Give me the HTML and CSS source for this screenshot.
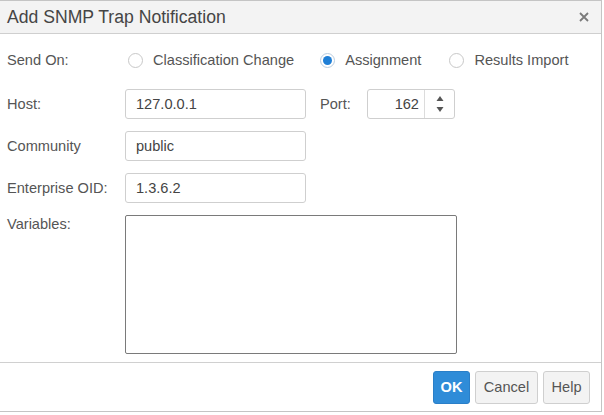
FILE: index.html
```html
<!DOCTYPE html>
<html>
<head>
<meta charset="utf-8">
<link rel="stylesheet" href="styles.css">
</head>
<body>
<div class="dialog">
  <div class="header">
    <span class="title">Add SNMP Trap Notification</span>
    <svg class="close" width="10" height="10" viewBox="0 0 10 10"><path d="M1 1 L9 9 M9 1 L1 9" stroke="#7a7a7a" stroke-width="1.8"/></svg>
  </div>
  <div class="body">
    <div class="row row-send">
      <label class="lbl">Send On:</label>
      <div class="radios">
        <span class="radio radio-1"><span class="circle"></span>Classification Change</span>
        <span class="radio radio-2"><span class="circle checked"></span>Assignment</span>
        <span class="radio"><span class="circle"></span>Results Import</span>
      </div>
    </div>
    <div class="row">
      <label class="lbl">Host:</label>
      <div class="field">127.0.0.1</div>
      <label class="lbl-port">Port:</label>
      <div class="spin">
        <span class="spin-val">162</span>
        <span class="spin-btns">
          <svg width="10" height="22" viewBox="0 0 10 22"><path d="M1.5 8 L5 3 L8.5 8 Z" fill="#555"/><path d="M1.5 14 L5 19 L8.5 14 Z" fill="#555"/></svg>
        </span>
      </div>
    </div>
    <div class="row">
      <label class="lbl">Community</label>
      <div class="field">public</div>
    </div>
    <div class="row">
      <label class="lbl">Enterprise OID:</label>
      <div class="field">1.3.6.2</div>
    </div>
    <div class="row row-vars">
      <label class="lbl lbl-top">Variables:</label>
      <div class="textarea"></div>
    </div>
  </div>
  <div class="footer">
    <button class="btn btn-ok">OK</button>
    <button class="btn btn-cancel">Cancel</button>
    <button class="btn btn-help">Help</button>
  </div>
</div>
</body>
</html>
```
FILE: styles.css
```css
* { box-sizing: border-box; }
html, body { margin: 0; padding: 0; background: #fff; }
body { font-family: "Liberation Sans", Arial, sans-serif; font-size: 14.6px; color: #555; }
.dialog {
  width: 602px;
  height: 412px;
  border: 1px solid #c4c4c4;
  border-left: none;
  display: flex;
  flex-direction: column;
  background: #fff;
}
.header {
  height: 33px;
  background: #f3f3f3;
  border-bottom: 1px solid #cfcfcf;
  display: flex;
  align-items: center;
  justify-content: space-between;
  padding: 0 12px 0 7px;
}
.title { font-size: 17.6px; color: #454545; }
.close { display: block; }
.body {
  flex: 1;
  padding: 11px 0 0 7px;
  display: flex;
  flex-direction: column;
  gap: 12px;
}
.row { display: flex; align-items: center; height: 30px; }
.row-send { height: 30px; margin-bottom: 2px; }
.lbl { width: 118px; flex: none; color: #555; }
.radios { display: flex; align-items: center; }
.radio { display: flex; align-items: center; color: #555; }
.radio-1 { margin-right: 23px; }
.radio-2 { margin-right: 25px; }
.circle {
  width: 15px; height: 15px; border-radius: 50%;
  border: 1px solid #c8c8c8; background: #fff;
  margin: 0 10px 0 3px; position: relative;
}
.circle.checked { border-color: #b9cde0; }
.circle.checked::after {
  content: ""; position: absolute; left: 2px; top: 2px;
  width: 9px; height: 9px; border-radius: 50%; background: #1f7fd6;
}
.field {
  width: 181px; height: 30px;
  border: 1px solid #cfcfcf; border-radius: 3px;
  padding: 0 10px; display: flex; align-items: center; color: #444;
}
.lbl-port { margin-left: 14px; width: 47px; }
.spin {
  width: 88px; height: 30px; display: flex;
  border: 1px solid #cfcfcf; border-radius: 3px;
}
.spin-val { flex: 1; display: flex; align-items: center; justify-content: flex-end; padding-right: 5px; color: #444; }
.spin-btns { width: 30px; border-left: 1px solid #dcdcdc; display: flex; align-items: center; justify-content: center; }
.row-vars { height: 139px; align-items: flex-start; }
.lbl-top { margin-top: 1px; }
.textarea {
  width: 332px; height: 139px;
  border: 1px solid #7a7a7a; border-radius: 2px;
}
.footer {
  height: 49px;
  border-top: 1px solid #d0d0d0;
  display: flex;
  justify-content: flex-end;
  align-items: center;
  gap: 5px;
  padding: 0 11px 0 0;
}
.btn {
  height: 33px; padding: 0;
  font-family: "Liberation Sans", Arial, sans-serif; font-size: 14.6px;
  border: 1px solid #cfcfcf; border-radius: 3px;
  background: #f3f3f3; color: #555;
}
.btn-ok { background: #2f8cd8; border-color: #2a7fc8; color: #fff; font-weight: bold; width: 37px; }
.btn-cancel { width: 63px; }
.btn-help { width: 47px; }
```
